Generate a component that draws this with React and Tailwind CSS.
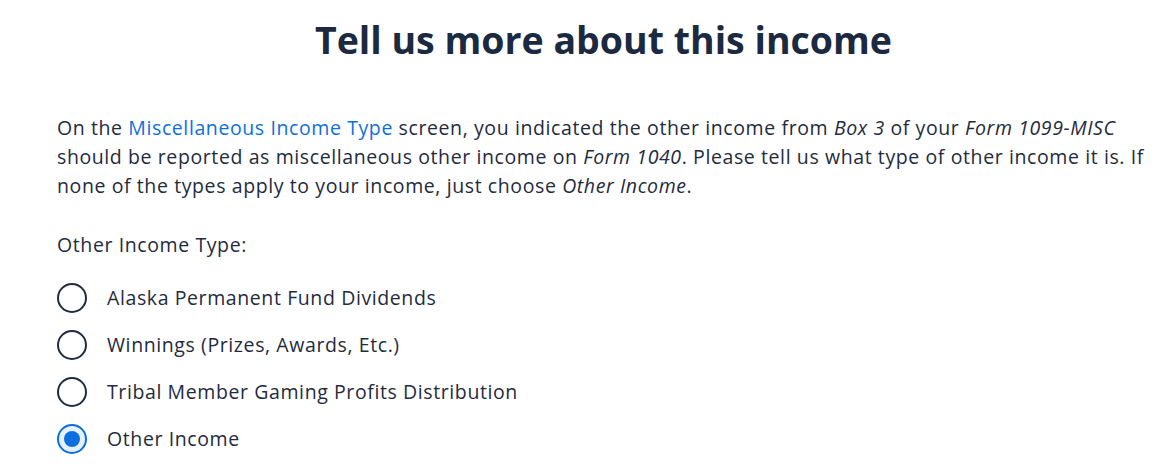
import { useState } from 'react'

const options = [
  'Alaska Permanent Fund Dividends',
  'Winnings (Prizes, Awards, Etc.)',
  'Tribal Member Gaming Profits Distribution',
  'Other Income',
]

export default function App() {
  const [selected, setSelected] = useState('Other Income')

  return (
    <div className="bg-white min-h-[473px] pl-[57px] pr-4 text-[#1f2b3e]" style={{ fontFamily: '"Open Sans", sans-serif' }}>
      <h1 className="pt-[17px] text-center text-[37.5px] font-bold leading-[46px] text-[#1b2a40]">
        Tell us more about this income
      </h1>
      <p className="mt-[50px] max-w-[1092px] text-[19.5px] leading-[29px] tracking-[0.6px]">
        On the <a href="#" className="text-[#0d6fde]">Miscellaneous Income Type</a> screen, you indicated the other income from{' '}
        <em>Box 3</em> of your <em>Form 1099-MISC</em> should be reported as miscellaneous other income on <em>Form 1040</em>.
        Please tell us what type of other income it is. If none of the types apply to your income, just choose{' '}
        <em>Other Income</em>.
      </p>
      <div className="mt-[30px] text-[19.5px] leading-[29px] tracking-[0.6px]">Other Income Type:</div>
      <div className="mt-[24px] flex flex-col gap-[17px]">
        {options.map((opt) => {
          const on = selected === opt
          return (
            <label key={opt} className="flex items-center gap-5 cursor-pointer">
              <span
                className={
                  on
                    ? 'w-[30px] h-[30px] rounded-full border-2 border-[#0d6fde] bg-[#e6f1fc] flex items-center justify-center'
                    : 'w-[30px] h-[30px] rounded-full border-2 border-[#1f2b3e] bg-white'
                }
              >
                {on && <span className="w-4 h-4 rounded-full bg-[#0d6fde]" />}
              </span>
              <input type="radio" className="hidden" checked={on} onChange={() => setSelected(opt)} />
              <span className="text-[19.5px] leading-[30px] tracking-[0.6px]">{opt}</span>
            </label>
          )
        })}
      </div>
    </div>
  )
}
